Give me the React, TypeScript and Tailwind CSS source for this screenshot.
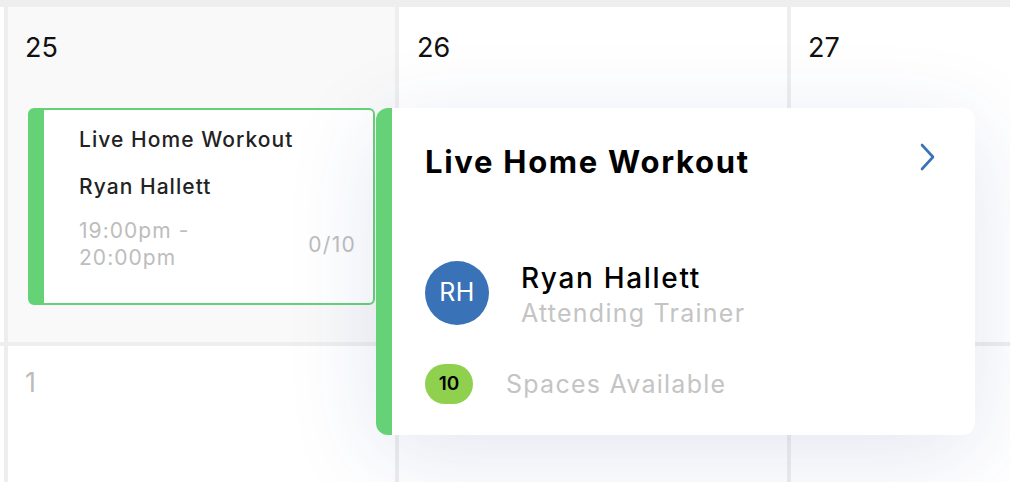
export default function App() {
  return (
    <div className="relative w-[1010px] h-[482px] overflow-hidden bg-white font-['Inter','Noto_Sans',sans-serif]">
      <div className="grid h-full grid-cols-[4px_387px_388px_1fr] grid-rows-[335px_1fr] gap-[4px] bg-[#eeeeee] pt-[7px]">
        <div className="bg-white" />
        <div className="flex flex-col bg-[#f9f9f9] px-[17px] pt-[23px]">
          <div className="text-[27px] leading-[36px] text-[#111]">25</div>
          <div className="mt-[42px] ml-[3px] mr-[3px] flex flex-col rounded-[6px] border-[2px] border-l-[16px] border-[#66d277] bg-white pl-[35px] pr-[17px] pt-[18px] pb-[32px]">
            <div className="text-[21px] font-medium leading-[24px] tracking-[0.05em] text-[#222]">Live Home Workout</div>
            <div className="mt-[23px] text-[21px] font-medium leading-[24px] tracking-[0.05em] text-[#222]">Ryan Hallett</div>
            <div className="mt-[18px] flex items-center justify-between">
              <div className="text-[21px] leading-[27px] tracking-[0.05em] text-[#bdbdbd]">
                19:00pm -<br />20:00pm
              </div>
              <div className="text-[21px] leading-[27px] tracking-[0.06em] text-[#bdbdbd]">0/10</div>
            </div>
          </div>
        </div>
        <div className="bg-white px-[18px] pt-[23px]">
          <div className="text-[27px] leading-[36px] text-[#111]">26</div>
        </div>
        <div className="bg-white px-[17px] pt-[23px]">
          <div className="text-[27px] leading-[36px] text-[#111]">27</div>
        </div>
        <div className="bg-white" />
        <div className="bg-white px-[17px] pt-[19px]">
          <div className="text-[27px] leading-[36px] text-[#bbbbbb]">1</div>
        </div>
        <div className="bg-white px-[18px] pt-[19px]">
          <div className="text-[27px] leading-[36px] text-[#bbbbbb]">2</div>
        </div>
        <div className="bg-white px-[17px] pt-[19px]">
          <div className="text-[27px] leading-[36px] text-[#bbbbbb]">3</div>
        </div>
      </div>

      <div className="absolute left-[376px] top-[108px] flex h-[327px] w-[599px] flex-col rounded-[12px] border-l-[16px] border-[#66d277] bg-white pl-[33px] pr-[38px] pt-[36px] shadow-[0_20px_90px_rgba(50,70,150,0.13)]">
        <div className="flex items-center justify-between">
          <div className="text-[31px] font-bold leading-[36px] tracking-[0.055em] text-black">Live Home Workout</div>
          <svg width="18" height="28" viewBox="0 0 18 28" className="-mt-[10px]">
            <polyline points="3,2 14,14 3,26" fill="none" stroke="#3a72b8" strokeWidth="2.6" strokeLinecap="round" strokeLinejoin="round" />
          </svg>
        </div>
        <div className="mt-[81px] flex items-start gap-[32px]">
          <div className="flex h-[64px] w-[64px] items-center justify-center rounded-full bg-[#3a72b8] text-[25px] tracking-[0.02em] text-white">RH</div>
          <div className="flex flex-col pt-[1px]">
            <div className="text-[28px] font-medium leading-[32px] tracking-[0.06em] text-black">Ryan Hallett</div>
            <div className="mt-[3px] text-[25px] leading-[32px] tracking-[0.05em] text-[#c4c4c4]">Attending Trainer</div>
          </div>
        </div>
        <div className="mt-[35px] flex items-center gap-[33px]">
          <div className="flex h-[40px] w-[48px] items-center justify-center rounded-full bg-[#8fd14f] text-[19px] font-semibold text-black">10</div>
          <div className="text-[25px] leading-[32px] tracking-[0.05em] text-[#c4c4c4]">Spaces Available</div>
        </div>
      </div>
    </div>
  );
}
